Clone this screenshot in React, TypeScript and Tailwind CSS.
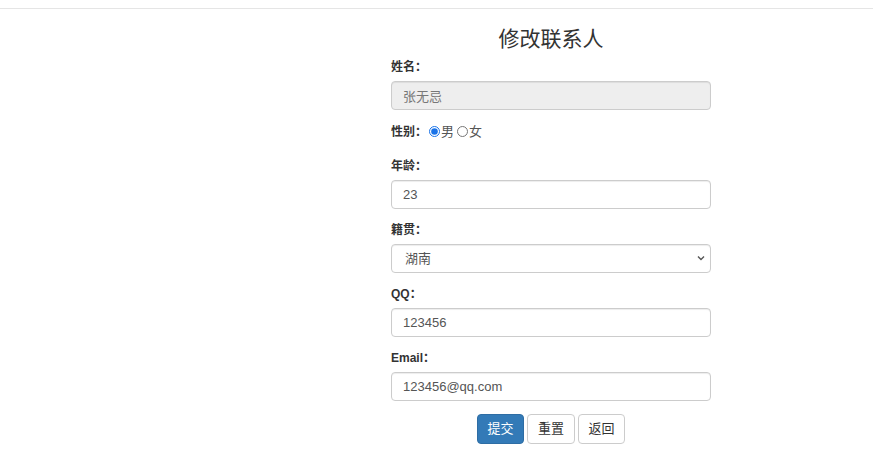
import React from 'react';

const font = { fontFamily: '"Liberation Sans", "Noto Sans CJK SC", sans-serif' };

const Field = ({ label, children }: { label: string; children: React.ReactNode }) => (
  <div className="mb-[13px]">
    <label className="block h-[17px] mb-[5px] text-[12px] leading-[17px] font-bold text-[#333]">{label}</label>
    {children}
  </div>
);

const baseInput =
  'block w-full h-[29px] px-[11px] text-[13px] text-[#555] border border-[#ccc] rounded-[4px] shadow-[inset_0_1px_1px_rgba(0,0,0,0.075)] outline-none';
const inputCls = `${baseInput} bg-white`;

const App = () => {
  return (
    <div className="w-[873px] h-[470px] bg-white overflow-hidden" style={font}>
      <div className="h-[9px] border-b border-[#e5e5e5]" />
      <form className="ml-[391px] w-[320px]" onSubmit={(e) => e.preventDefault()}>
        <h2 className="mt-[18px] mb-[8px] h-[24px] text-center text-[21px] leading-[24px] font-normal text-[#333]">
          修改联系人
        </h2>

        <Field label="姓名：">
          <input className={`${baseInput} bg-[#eee] text-[#777]`} defaultValue="张无忌" disabled />
        </Field>

        <div className="flex items-center h-[17px] mb-[18px] text-[12px] text-[#333]">
          <span className="font-bold">性别：</span>
          <label className="flex items-center ml-[2px] text-[13px] text-[#555]">
            <input type="radio" name="sex" defaultChecked className="w-[11px] h-[11px] m-0 mr-[1px] accent-[#1a73e8]" />
            男
          </label>
          <label className="flex items-center ml-[3px] text-[13px] text-[#555]">
            <input type="radio" name="sex" className="w-[11px] h-[11px] m-0 mr-[1px]" />
            女
          </label>
        </div>

        <Field label="年龄：">
          <input className={inputCls} defaultValue="23" />
        </Field>

        <Field label="籍贯：">
          <div className="relative">
            <select className={`${inputCls} appearance-none pl-[13px]`} defaultValue="湖南">
              <option>湖南</option>
              <option>广东</option>
              <option>北京</option>
            </select>
            <svg className="absolute right-[6px] top-[11px] w-[8px] h-[6px] pointer-events-none" viewBox="0 0 8 6">
              <path d="M1 1.5 L4 4.5 L7 1.5" fill="none" stroke="#555" strokeWidth="1.4" />
            </svg>
          </div>
        </Field>

        <Field label="QQ：">
          <input className={inputCls} defaultValue="123456" />
        </Field>

        <Field label="Email：">
          <input className={inputCls} defaultValue="123456@qq.com" />
        </Field>

        <div className="flex justify-center gap-[3px]">
          <button className="h-[30px] w-[47px] text-[13px] text-white bg-[#337ab7] border border-[#2e6da4] rounded-[4px]">提交</button>
          <button className="h-[30px] w-[48px] text-[13px] text-[#333] bg-white border border-[#ccc] rounded-[4px]">重置</button>
          <button className="h-[30px] w-[47px] text-[13px] text-[#333] bg-white border border-[#ccc] rounded-[4px]">返回</button>
        </div>
      </form>
    </div>
  );
};

export default App;
